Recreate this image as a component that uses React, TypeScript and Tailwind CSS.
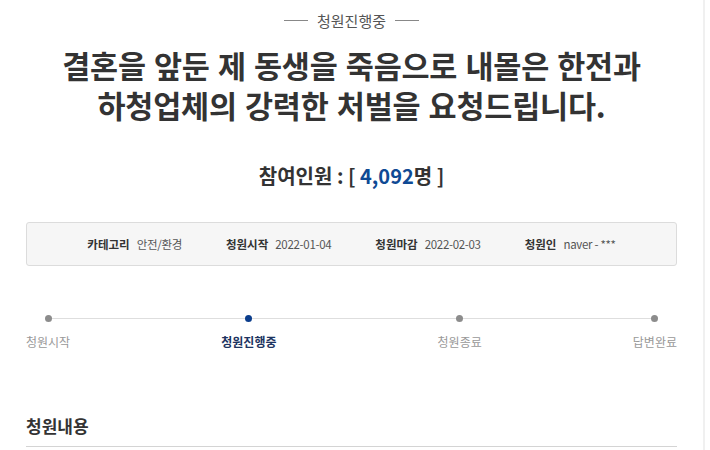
const font = { fontFamily: '"Noto Sans CJK KR", "Noto Sans", sans-serif' };

const meta = [
  { label: "카테고리", value: "안전/환경" },
  { label: "청원시작", value: "2022-01-04" },
  { label: "청원마감", value: "2022-02-03" },
  { label: "청원인", value: "naver - ***" },
];

const steps = [
  { title: "청원시작", active: false },
  { title: "청원진행중", active: true },
  { title: "청원종료", active: false },
  { title: "답변완료", active: false },
];

export default function App() {
  return (
    <div className="w-[710px] h-[450px] overflow-hidden bg-white" style={font}>
      <div className="w-[705px] h-full border-r-2 border-[#f0f0f0] px-[26px]">
        {/* status */}
        <div className="flex items-center justify-center gap-[9px] pt-[10px] h-[31px]">
          <span className="w-[24px] h-px bg-[#888]" />
          <span className="text-[15px] leading-[20px] text-[#555]">청원진행중</span>
          <span className="w-[24px] h-px bg-[#888]" />
        </div>

        <h1 className="mt-[14px] text-center text-[30.5px] leading-[40px] font-bold text-[#333] tracking-[-0.2px] [word-spacing:1.5px]">
          결혼을 앞둔 제 동생을 죽음으로 내몰은 한전과
          <br />
          하청업체의 강력한 처벌을 요청드립니다.
        </h1>

        <div className="mt-[38px] text-center text-[20px] leading-[26px] font-bold text-[#333]">
          참여인원 : [ <span className="text-[#0f4a94]">4,092</span>명 ]
        </div>

        {/* meta box */}
        <div className="mt-[33px] h-[44px] flex items-center justify-center gap-[44px] bg-[#f6f6f6] border border-[#dcdcdc] rounded-[3px]">
          {meta.map((m) => (
            <div key={m.label} className="flex items-center gap-[7px] text-[11.5px] leading-[16px]">
              <span className="font-bold text-[#333]">{m.label}</span>
              <span className="text-[#555] tracking-[-0.3px]">{m.value}</span>
            </div>
          ))}
        </div>

        {/* progress */}
        <div className="relative mt-[49px] flex justify-between">
          <div className="absolute left-[20px] right-[22px] top-[3px] h-px bg-[#dedede]" />
          {steps.map((s) => (
            <div
              key={s.title}
              className={s.active ? "relative flex flex-col items-center mr-[10px]" : "relative flex flex-col items-center"}
            >
              <span
                className={
                  s.active
                    ? "w-[7px] h-[7px] rounded-full bg-[#0b3d8c]"
                    : "w-[7px] h-[7px] rounded-full bg-[#8c8c8c]"
                }
              />
              <span
                className={
                  s.active
                    ? "mt-[12px] text-[12px] leading-[16px] font-bold text-[#1d3461]"
                    : "mt-[12px] text-[12px] leading-[16px] text-[#999]"
                }
              >
                {s.title}
              </span>
            </div>
          ))}
        </div>

        <h2 className="mt-[65px] text-[17px] leading-[22px] font-bold text-[#333]">청원내용</h2>
        <div className="mt-[9px] h-px bg-[#d4d4d4]" />
      </div>
    </div>
  );
}
